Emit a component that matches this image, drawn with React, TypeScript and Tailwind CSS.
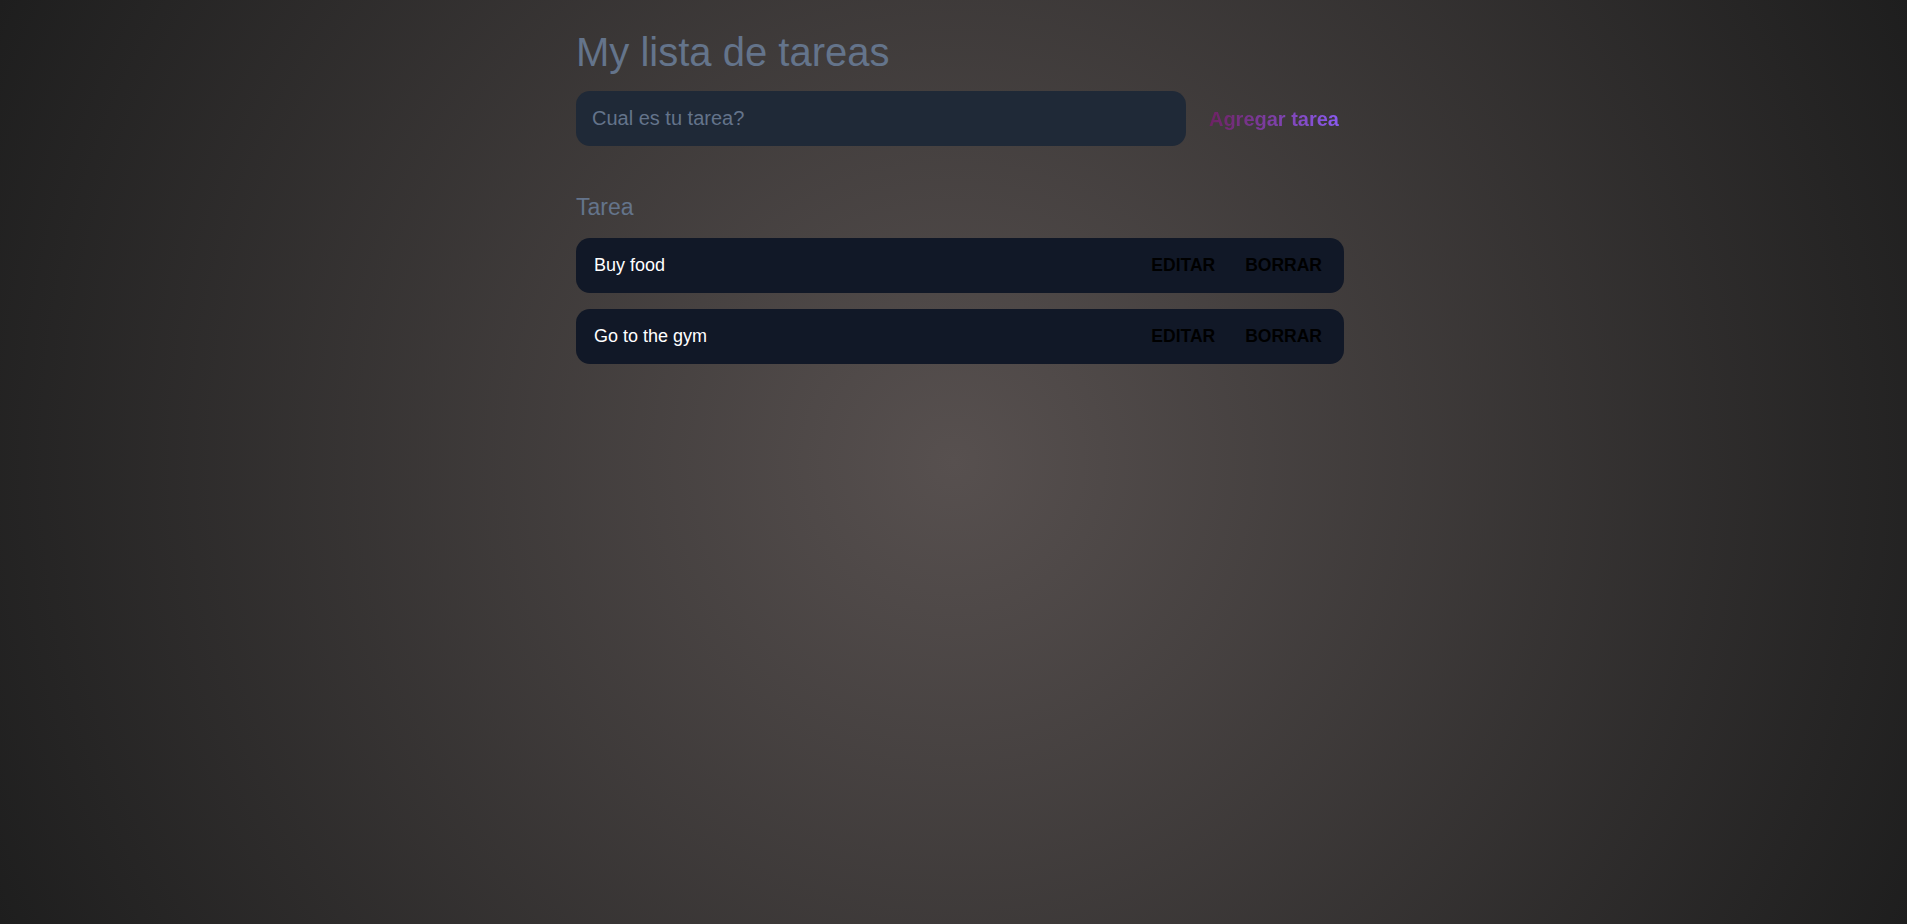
import React, { useState } from "react";

type Task = { id: number; text: string };

export default function App() {
  const [tasks] = useState<Task[]>([
    { id: 1, text: "Buy food" },
    { id: 2, text: "Go to the gym" },
  ]);
  const [value, setValue] = useState("");

  return (
    <div className="min-h-screen w-full bg-[radial-gradient(circle,#57504f_0%,#1e1e1e_100%)] font-['Liberation_Sans',Arial,sans-serif] flex justify-center pl-[13px]">
      <div className="w-[768px] pt-8">
        <h1 className="text-[40px] leading-none text-[#64748b] mb-[19px]">My lista de tareas</h1>
        <form
          className="flex items-center gap-4"
          onSubmit={(e) => e.preventDefault()}
        >
          <input
            value={value}
            onChange={(e) => setValue(e.target.value)}
            placeholder="Cual es tu tarea?"
            className="flex-1 h-[55px] rounded-[14px] bg-[#1f2937] px-4 text-[20px] text-white placeholder:text-[#64748b] outline-none"
          />
          <button
            type="submit"
            className="pl-[7px] pr-[5px] text-[20px] font-bold bg-gradient-to-r from-[#6b1d5c] to-[#8b5cf6] bg-clip-text text-transparent"
          >
            Agregar tarea
          </button>
        </form>

        <h2 className="mt-[50px] text-[23px] leading-none text-[#64748b]">Tarea</h2>

        <ul className="mt-[19px] flex flex-col gap-4">
          {tasks.map((t) => (
            <li
              key={t.id}
              className="h-[55px] rounded-[14px] bg-[#111827] flex items-center justify-between pl-[18px] pr-[22px]"
            >
              <span className="text-[18px] text-white">{t.text}</span>
              <div className="flex items-center gap-[30px]">
                <button className="text-[17.5px] font-bold text-black uppercase">Editar</button>
                <button className="text-[17.5px] font-bold text-black uppercase">Borrar</button>
              </div>
            </li>
          ))}
        </ul>
      </div>
    </div>
  );
}
